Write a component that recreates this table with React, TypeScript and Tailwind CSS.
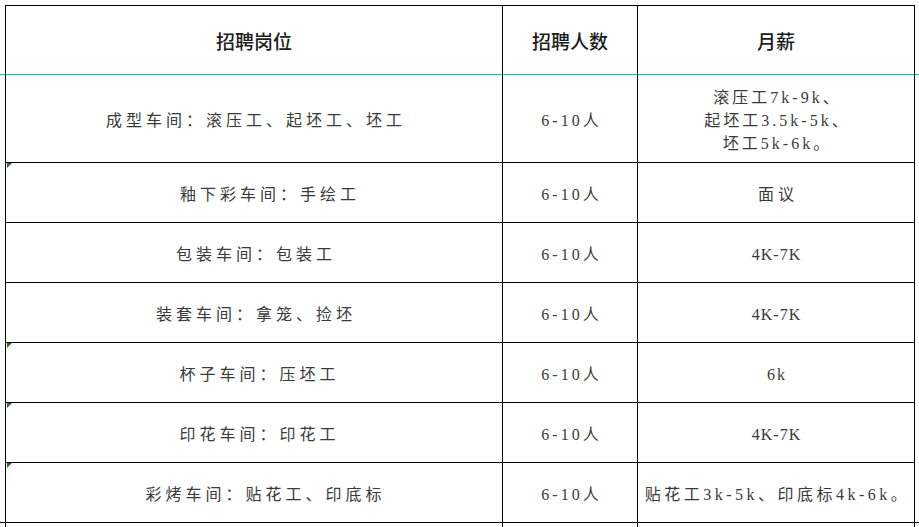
import React from "react";

type Row = { a: string; b: string; c: string[]; h: string; mark: boolean; pad: string; tc: string };

const rows: Row[] = [
  { a: "成型车间：滚压工、起坯工、坯工", b: "6-10人", c: ["滚压工7k-9k、", "起坯工3.5k-5k、", "坯工5k-6k。"], h: "h-[87px]", mark: false, pad: "pl-[4px]", tc: "tracking-[3px] pl-[3px]" },
  { a: "釉下彩车间：手绘工", b: "6-10人", c: ["面议"], h: "h-[60px] border-t", mark: true, pad: "pl-[32px]", tc: "tracking-[4px] pl-[4px]" },
  { a: "包装车间：包装工", b: "6-10人", c: ["4K-7K"], h: "h-[60px] border-t", mark: false, pad: "pl-[4px]", tc: "tracking-[1px] pl-[1px]" },
  { a: "装套车间：拿笼、捡坯", b: "6-10人", c: ["4K-7K"], h: "h-[60px] border-t", mark: false, pad: "pl-[4px]", tc: "tracking-[1px] pl-[1px]" },
  { a: "杯子车间：压坯工", b: "6-10人", c: ["6k"], h: "h-[60px] border-t", mark: true, pad: "pl-[11px]", tc: "tracking-[2px] pl-[2px]" },
  { a: "印花车间：印花工", b: "6-10人", c: ["4K-7K"], h: "h-[60px] border-t", mark: true, pad: "pl-[11px]", tc: "tracking-[1px] pl-[1px]" },
  { a: "彩烤车间：贴花工、印底标", b: "6-10人", c: ["贴花工3k-5k、印底标4k-6k。"], h: "h-[60px] border-t", mark: true, pad: "pl-[23px]", tc: "tracking-[3.5px] pl-[3px]" },
];

const bodyFont = "font-['Liberation_Serif','Noto_Sans_CJK_SC',serif]";

function Mark() {
  return (
    <svg className="absolute left-[1px] top-0" width="5" height="5" viewBox="0 0 5 5">
      <polygon points="0,0 5,0 0,5" fill="#2f6b2f" />
    </svg>
  );
}

export default function App() {
  return (
    <div className="w-[919px] h-[527px] overflow-hidden bg-white pt-[5px]">
      {/* header */}
      <div className="ml-[5px] w-[910px] h-[69px] flex border-t border-black font-['Noto_Sans_CJK_SC',sans-serif] text-[19px] font-medium text-[#1c1c1c]">
        <div className="w-[497px] border-l border-black flex items-center justify-center pt-[3px]">招聘岗位</div>
        <div className="w-[135px] border-l border-black flex items-center justify-center pt-[3px]">招聘人数</div>
        <div className="w-[278px] border-l border-r border-black flex items-center justify-center pt-[3px]">月薪</div>
      </div>
      {/* green line */}
      <div className="flex h-px w-full">
        <div className="w-[5px] bg-[#45b09a]" />
        <div className="w-px bg-black" />
        <div className="w-[496px] bg-[#45b09a]" />
        <div className="w-px bg-black" />
        <div className="w-[134px] bg-[#45b09a]" />
        <div className="w-px bg-black" />
        <div className="w-[276px] bg-[#45b09a]" />
        <div className="w-px bg-black" />
        <div className="flex-1 bg-[#45b09a]" />
      </div>
      {/* body */}
      {rows.map((r, i) => (
        <div key={i} className={`ml-[5px] w-[910px] flex border-black ${r.h} ${bodyFont} text-[16px] text-[#3a3a3a]`}>
          <div className={`relative w-[497px] border-l border-black flex items-center justify-center tracking-[4px] pt-[4px] ${r.pad}`}>
            {r.mark && <Mark />}
            {r.a}
          </div>
          <div className="w-[135px] border-l border-black flex items-center justify-center tracking-[3px] pl-[3px] pt-[4px]">{r.b}</div>
          <div className={`w-[278px] border-l border-r border-black flex flex-col items-center justify-center leading-[23px] pt-[4px] ${r.tc}`}>
            {r.c.map((t, j) => (
              <div key={j}>{t}</div>
            ))}
          </div>
        </div>
      ))}
      <div className="h-px w-full bg-black" />
      <div className="ml-[5px] w-[910px] h-[4px] flex">
        <div className="w-[497px] border-l border-black" />
        <div className="w-[135px] border-l border-black" />
        <div className="w-[278px] border-l border-r border-black" />
      </div>
    </div>
  );
}
